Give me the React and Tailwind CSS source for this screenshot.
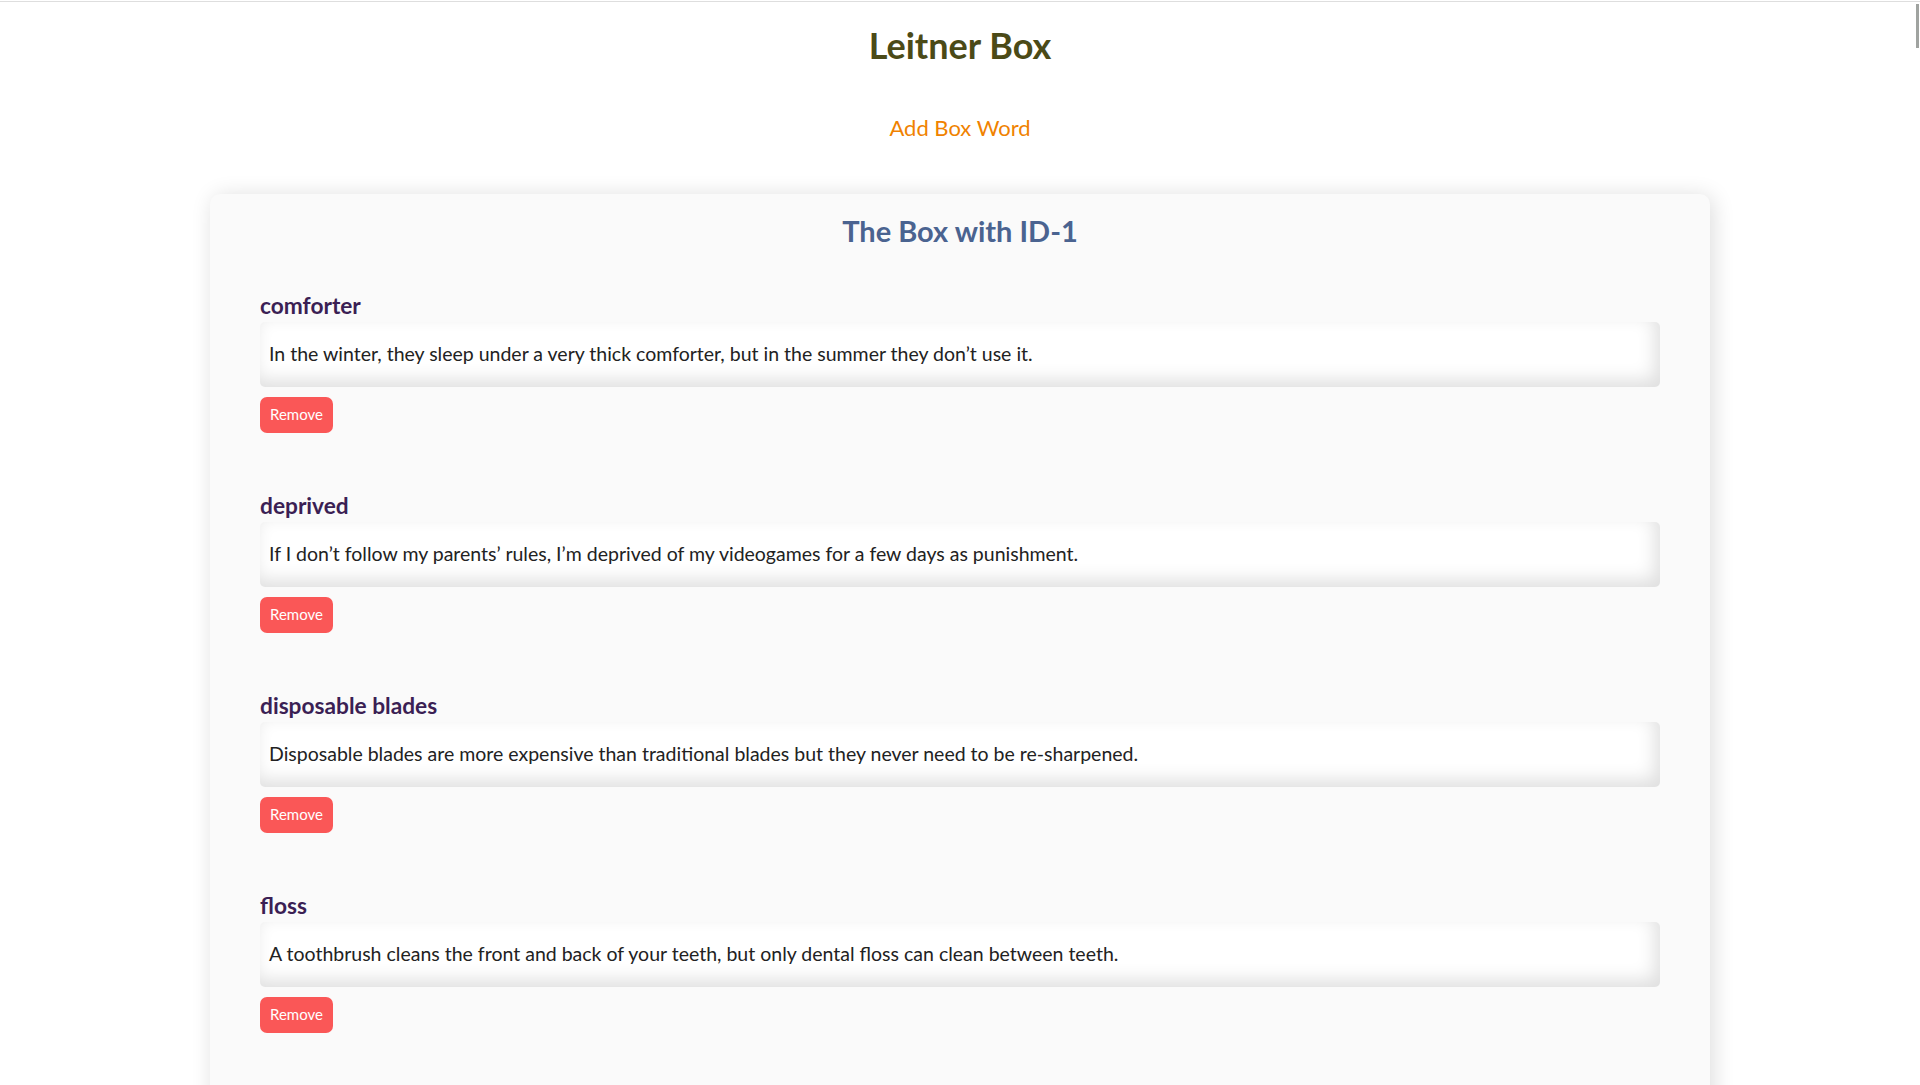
import React from 'react';

const words = [
  {
    id: 1,
    word: 'comforter',
    sentence: 'In the winter, they sleep under a very thick comforter, but in the summer they don’t use it.',
  },
  {
    id: 2,
    word: 'deprived',
    sentence: 'If I don’t follow my parents’ rules, I’m deprived of my videogames for a few days as punishment.',
  },
  {
    id: 3,
    word: 'disposable blades',
    sentence: 'Disposable blades are more expensive than traditional blades but they never need to be re-sharpened.',
  },
  {
    id: 4,
    word: 'floss',
    sentence: 'A toothbrush cleans the front and back of your teeth, but only dental floss can clean between teeth.',
  },
];

function WordItem({ item }) {
  return (
    <div className="mb-[59px]">
      <h3 className="text-[22.7px] leading-[28px] font-bold text-[#3b1f54] mb-[2px]">{item.word}</h3>
      <div className="h-[65px] flex items-center pl-[9px] pr-4 pb-[2px] bg-white rounded-[5px] shadow-[inset_-5px_-7px_18px_rgba(0,0,0,0.13)]">
        <p className="text-[19.5px] text-[#222]">{item.sentence}</p>
      </div>
      <button className="mt-[10px] h-9 w-[73px] pb-px rounded-[7px] bg-[#fa5757] text-white text-[15px] flex items-center justify-center">
        Remove
      </button>
    </div>
  );
}

export default function App() {
  return (
    <div className="relative h-[1085px] overflow-hidden bg-white font-['Lato','Liberation_Sans',sans-serif]">
      {/* top rule */}
      <div className="pt-px">
        <div className="h-px bg-[#dedede]" />
      </div>

      {/* scrollbar thumb */}
      <div className="absolute right-[1px] top-[4px] w-[3px] h-[44px] bg-[#a0a3a0]" />

      <h1 className="mt-[21px] text-center text-[36px] leading-[44px] font-bold text-[#4b4a17]">Leitner Box</h1>

      <div className="mt-[45px] text-center">
        <a className="text-[22px] leading-[32px] text-[#f08200] cursor-pointer">Add Box Word</a>
      </div>

      <div className="mt-[50px] mx-auto w-[1500px] bg-[#fafafa] rounded-[10px] shadow-[3px_2px_22px_rgba(0,0,0,0.14)] pt-[19px] px-[50px] pb-10">
        <h2 className="text-center text-[29px] leading-[36px] font-bold text-[#4a6390]">
          The Box with ID-1
        </h2>
        <div className="mt-[43px]">
          {words.map((item) => (
            <WordItem key={item.id} item={item} />
          ))}
        </div>
      </div>
    </div>
  );
}
